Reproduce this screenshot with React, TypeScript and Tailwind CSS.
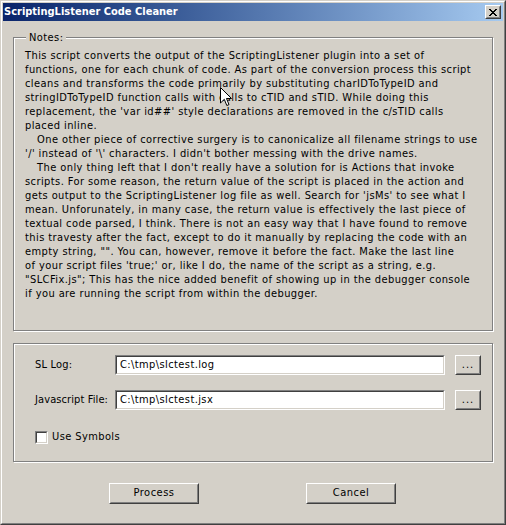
import React from 'react'

const NOTES: { text: string; indent?: boolean }[] = [
  { text: `This script converts the output of the ScriptingListener plugin into a set of` },
  { text: `functions, one for each chunk of code. As part of the conversion process this script` },
  { text: `cleans and transforms the code primarily by substituting charIDToTypeID and` },
  { text: `stringIDToTypeID function calls with calls to cTID and sTID. While doing this` },
  { text: `replacement, the 'var id##' style declarations are removed in the c/sTID calls` },
  { text: `placed inline.` },
  { text: `One other piece of corrective surgery is to canonicalize all filename strings to use`, indent: true },
  { text: `'/' instead of '\\' characters. I didn't bother messing with the drive names.` },
  { text: `The only thing left that I don't really have a solution for is Actions that invoke`, indent: true },
  { text: `scripts. For some reason, the return value of the script is placed in the action and` },
  { text: `gets output to the ScriptingListener log file as well. Search for 'jsMs' to see what I` },
  { text: `mean. Unforunately, in many case, the return value is effectively the last piece of` },
  { text: `textual code parsed, I think. There is not an easy way that I have found to remove` },
  { text: `this travesty after the fact, except to do it manually by replacing the code with an` },
  { text: `empty string, "". You can, however, remove it before the fact. Make the last line` },
  { text: `of your script files 'true;' or, like I do, the name of the script as a string, e.g.` },
  { text: `"SLCFix.js"; This has the nice added benefit of showing up in the debugger console` },
  { text: `if you are running the script from within the debugger.` },
]

function CloseGlyph() {
  const rows = ['11000011', '01100110', '00111100', '00011000', '00111100', '01100110', '11000011']
  return (
    <svg width="8" height="7" viewBox="0 0 8 7" shapeRendering="crispEdges">
      {rows.map((r, y) =>
        r.split('').map((c, x) => (c === '1' ? <rect key={`${x}-${y}`} x={x} y={y} width="1" height="1" fill="#000" /> : null))
      )}
    </svg>
  )
}

function Cursor() {
  return (
    <svg width="12" height="20" viewBox="0 0 12 20" className="absolute left-[220px] top-[87px]">
      <path d="M0.5 0.5 L0.5 16 L4.3 12.3 L6.8 18.5 L9 17.6 L6.5 11.5 L11.5 11.5 Z" fill="#fff" stroke="#000" strokeWidth="1" />
    </svg>
  )
}

function Raised({ className = '', children }: { className?: string; children: React.ReactNode }) {
  return (
    <div className={`border border-t-white border-l-white border-r-[#404040] border-b-[#404040] bg-[#d4d0c8] ${className}`}>
      <div className="w-full h-full border border-transparent border-r-[#808080] border-b-[#808080] flex items-center justify-center">
        {children}
      </div>
    </div>
  )
}

function Field({ value }: { value: string }) {
  return (
    <div className="w-[330px] h-[20px] border border-t-[#808080] border-l-[#808080] border-r-white border-b-white">
      <div className="w-full h-full bg-white border border-t-[#404040] border-l-[#404040] border-r-[#d4d0c8] border-b-[#d4d0c8] pl-[3px] leading-[16px] tracking-[0.4px]">
        {value}
      </div>
    </div>
  )
}

export default function App() {
  return (
    <div className="w-[506px] h-[525px] relative font-['DejaVu_Sans_Condensed','Liberation_Sans',sans-serif] text-[11px] text-black select-none">
      <div className="w-full h-full border border-t-[#d4d0c8] border-l-[#d4d0c8] border-r-[#404040] border-b-[#404040] bg-[#d4d0c8]">
        <div className="w-full h-full border border-t-white border-l-white border-r-[#808080] border-b-[#808080] p-px flex flex-col">
          {/* title bar */}
          <div className="h-[18px] bg-linear-to-r from-[#0a246a] to-[#a6caf0] flex items-center justify-between pl-[1px] pr-[2px]">
            <span className="text-white font-bold text-[11px] leading-[14px]">ScriptingListener Code Cleaner</span>
            <Raised className="w-[16px] h-[14px]">
              <CloseGlyph />
            </Raised>
          </div>

          <div className="flex-1 flex flex-col px-[10px] pt-[16px]">
            {/* Notes */}
            <div className="relative h-[294px] w-[480px] border border-[#808080] shadow-[inset_1px_1px_0_#fff,1px_1px_0_#fff] pl-[11px] pt-[11px] tracking-[0.42px]">
              <span className="absolute left-[12px] -top-[7px] px-[3px] bg-[#d4d0c8] leading-[14px]">Notes:</span>
              {NOTES.map((l, i) => (
                <div key={i} className={`leading-[14px] whitespace-nowrap ${l.indent ? 'pl-[12px]' : ''}`}>
                  {l.text}
                </div>
              ))}
            </div>

            {/* Files */}
            <div className="mt-[12px] h-[119px] w-[480px] border border-[#808080] shadow-[inset_1px_1px_0_#fff,1px_1px_0_#fff] pl-[21px] pt-[11px] flex flex-col">
              <div className="flex items-center h-[20px]">
                <span className="w-[80px] tracking-[0.2px]">SL Log:</span>
                <Field value="C:\tmp\slctest.log" />
                <Raised className="ml-[10px] w-[26px] h-[20px]">
                  <span className="leading-none pb-[2px] tracking-[1px]">...</span>
                </Raised>
              </div>
              <div className="flex items-center h-[20px] mt-[15px]">
                <span className="w-[80px] tracking-[0.1px]">Javascript File:</span>
                <Field value="C:\tmp\slctest.jsx" />
                <Raised className="ml-[10px] w-[26px] h-[20px]">
                  <span className="leading-none pb-[2px] tracking-[1px]">...</span>
                </Raised>
              </div>
              <label className="flex items-center mt-[21px] h-[13px]">
                <span className="w-[13px] h-[13px] border border-t-[#808080] border-l-[#808080] border-r-white border-b-white">
                  <span className="block w-full h-full bg-white border border-t-[#404040] border-l-[#404040] border-r-[#d4d0c8] border-b-[#d4d0c8]" />
                </span>
                <span className="ml-[4px] tracking-[0.4px]">Use Symbols</span>
              </label>
            </div>

            {/* Buttons */}
            <div className="flex mt-[21px] pl-[96px] gap-[107px] tracking-[0.5px]">
              <Raised className="w-[90px] h-[21px]">Process</Raised>
              <Raised className="w-[90px] h-[21px]">Cancel</Raised>
            </div>
          </div>
        </div>
      </div>
      <Cursor />
    </div>
  )
}
